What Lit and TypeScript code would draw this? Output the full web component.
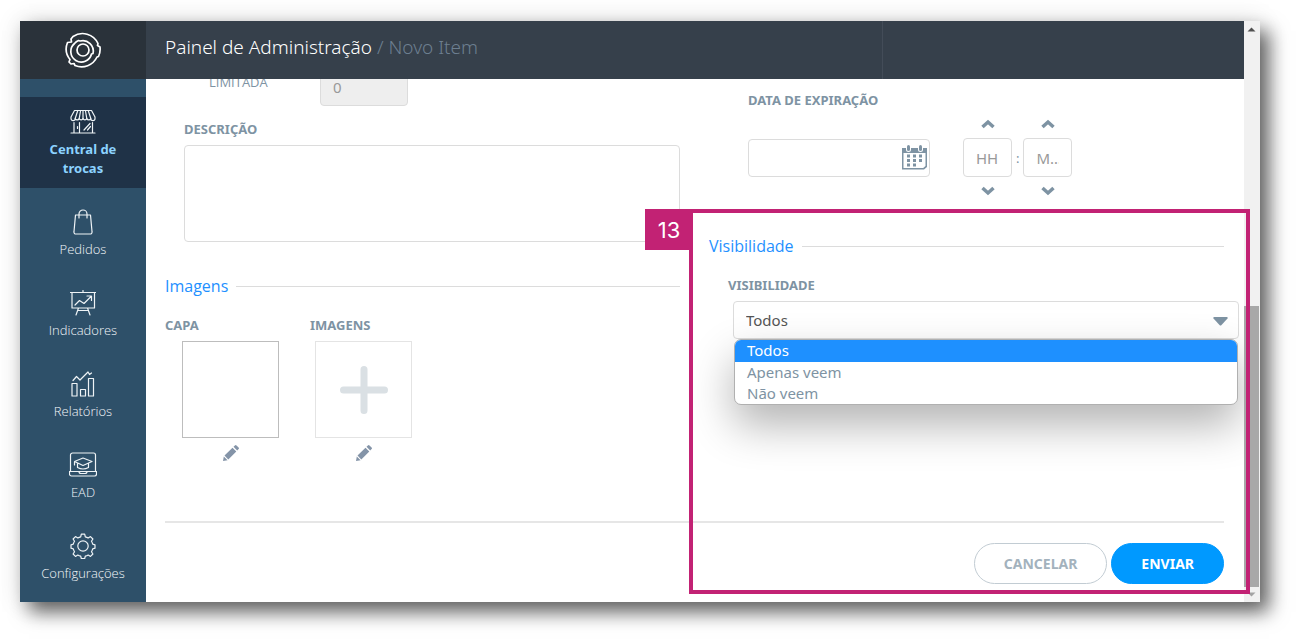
import { LitElement, html, css, svg } from "lit";
import { customElement, property, state } from "lit/decorators.js";
import { classMap } from "lit/directives/class-map.js";

const icons: Record<string, unknown> = {
  store: svg`
    <path d="M4.500 1.500h17l3.500 6.500v1.500a2.100 2.100 0 0 1-4.200 0a2.100 2.100 0 0 1-4 0a2 2 0 0 1-3.800 0a2 2 0 0 1-3.800 0a2.100 2.100 0 0 1-4 0a2.100 2.100 0 0 1-4.200 0V8z"/>
    <path d="M7.800 1.500L5.200 9.500M10.600 1.500L9.200 9.500M13 1.500v8M15.400 1.500l1.400 8M18.200 1.500l2.600 8"/>
    <path d="M1 24h24M4 13.500V24M9.500 13.500V24M22.500 13.500V24M7.500 17.500v2M14 21l6-6.500M17.500 21l3-3.500"/>`,
  bag: svg`
    <path d="M5.500 6h15l1.500 16.500a2 2 0 0 1-2 2.500H6a2 2 0 0 1-2-2.500z"/>
    <path d="M9 9V5a4 4 0 0 1 8 0v4"/>`,
  board: svg`
    <path d="M.5 2.500h25M2 2.500v15.500h22.500V2.500M13 .5v2M8.500 18L6 25M17.500 18L20 25M8 20.500h10.500"/>
    <path d="M5 15l4.500-4.500l4.500 3L21 6.500M17 6h4.500v4.500"/>`,
  chart: svg`
    <path d="M2 12.500h5V25H2zM10.500 18.500h5V25h-5zM18.500 7.500h5V25h-5z"/>
    <path d="M3 9.500l3.500-4l3.500 3.500l8-8l1.500 2.500l2-1.500"/>`,
  laptop: svg`
    <path d="M1.500 19V3a2 2 0 0 1 2-2h21a2 2 0 0 1 2 2v16M.5 19.500h27v2.500a2 2 0 0 1-2 2h-23a2 2 0 0 1-2-2zM10 19.500q0 2 2 2h4q2 0 2-2"/>
    <path d="M5.500 9.500L14 6l9 3.500l-9 4zM8.500 11v4.500q5.500 3 11 0V11M5.500 9.500v3.500"/>`,
  gear: svg`
    <circle cx="13" cy="13" r="5.200"/>
    <path d="M11.300 1.200h3.400l.6 2.600q1.600.4 2.900 1.200l2.300-1.400l2.400 2.400l-1.400 2.300q.8 1.300 1.200 2.900l2.300.6v3.400l-2.300.6q-.4 1.600-1.200 2.900l1.400 2.300l-2.400 2.400l-2.300-1.400q-1.300.8-2.900 1.200l-.6 2.300h-3.400l-.6-2.300q-1.600-.4-2.900-1.200l-2.300 1.400l-2.400-2.400l1.400-2.300q-.8-1.300-1.200-2.900l-2.300-.6v-3.400l2.300-.6q.4-1.600 1.200-2.900l-1.400-2.300l2.400-2.400l2.300 1.400q1.300-.8 2.900-1.200z"/>`,
};

@customElement("side-nav")
class SideNav extends LitElement {
  @property() current = "store";

  static styles = css`
    :host { display: block; background: #2e5069; }
    .list { list-style: none; margin: 0; padding: 18px 0; display: flex; flex-direction: column; gap: 9px; }
    .link {
      display: flex; flex-direction: column; align-items: center; gap: 5px;
      padding: 12px 24px 10px; text-align: center; text-decoration: none;
      font: 400 13px/19px "Open Sans", sans-serif; color: #f2f6f9;
    }
    .link.current { background: #1f3247; color: #8cd3ff; font-family: "Noto Sans", sans-serif; font-weight: 700; }
    .label { white-space: nowrap; font-weight: 300; }
    .current .label { white-space: normal; font-weight: 700; }
    .icon { display: block; height: 26px; fill: none; stroke: #eef3f6; stroke-width: 1.200; stroke-linejoin: round; stroke-linecap: round; }
  `;

  private entries = [
    { icon: "store", label: "Central de trocas" },
    { icon: "bag", label: "Pedidos" },
    { icon: "board", label: "Indicadores" },
    { icon: "chart", label: "Relatórios" },
    { icon: "laptop", label: "EAD" },
    { icon: "gear", label: "Configurações" },
  ];

  render() {
    return html`<nav aria-label="Principal">
      <ul class="list">
        ${this.entries.map(
          (e) => html`<li>
            <a href="#" class=${classMap({ link: true, current: e.icon === this.current })}>
              <svg class="icon" width=${e.icon === "laptop" ? 28 : 26} viewBox=${e.icon === "laptop" ? "0 0 28 26" : "0 0 26 26"} aria-hidden="true">${icons[e.icon]}</svg>
              <span class="label">${e.label}</span>
            </a>
          </li>`
        )}
      </ul>
    </nav>`;
  }
}

@customElement("app-root")
class AppRoot extends LitElement {
  @state() private chosen = "Todos";
  private options = ["Todos", "Apenas veem", "Não veem"];

  static styles = css`
    * { box-sizing: border-box; }
    :host { display: block; background: #fff; font-family: "Noto Sans", sans-serif; color: #7e93a3; }
    .page { height: 100vh; padding: 21px 40px 40px 20px; display: flex; overflow: hidden; }
    .window {
      position: relative; flex: 1; display: grid; grid-template: 58px minmax(0, 1fr) / 126px minmax(0, 1fr) 16px;
      background: #fff; box-shadow: 9px 10px 18px rgba(0, 0, 0, 0.6), 0 0 24px rgba(0, 0, 0, 0.12);
    }
    .brand { background: #2a323a; display: flex; align-items: center; justify-content: center; }
    .logo { fill: none; stroke: #fff; stroke-width: 1.700; stroke-linejoin: round; }
    .bar { background: #36404b; display: flex; }
    .title { flex: 1; margin: 0; padding: 0 20px 6px 19px; font-size: 19px; line-height: 52px; font-weight: 300; color: #fff; }
    .crumb { color: #6d7f90; }
    .bar-end { flex: 0 0 33%; border-left: 1px solid #434c58; }

    .scrollbar { grid-column: 3; grid-row: 1 / 3; background: #f1f1f1; display: flex; flex-direction: column; align-items: center; padding-right: 1px; }
    .arrow { height: 15px; display: block; }
    .track { flex: 1; align-self: stretch; display: flex; flex-direction: column; justify-content: flex-end; }
    .thumb { height: 51%; background: #a8a8a8; }

    .form { grid-column: 2; min-height: 0; overflow: hidden; display: flex; flex-direction: column; justify-content: flex-end; padding: 0 20px 0 19px; }
    .columns { display: grid; grid-template-columns: minmax(0, 1fr) minmax(0, 1fr); gap: 29px; padding-bottom: 60px; }
    .label { display: block; font-size: 13px; line-height: 20px; font-weight: 700; }
    .field { width: 100%; height: 38px; border: 1px solid #dcdcdc; border-radius: 4px; background: #fff; font: 400 15px/20px "Noto Sans", sans-serif; color: #555; padding: 0 12px; display: block; }
    .field::placeholder { color: #999; opacity: 1; }

    .limit { display: flex; padding-left: 44px; }
    .limit-label { width: 111px; font: 400 13px/28px "Open Sans", sans-serif; }
    .limit-field { width: 88px; background: #eee; color: #999; }
    .description { padding: 13px 0 0 19px; }
    .area { height: 97px; margin-top: 6px; resize: none; }

    .heading { display: flex; align-items: center; gap: 8px; margin: 32px 0 17px; font: 400 16px/24px "Open Sans", sans-serif; color: #1e90ff; }
    .heading::after { content: ""; flex: 1; border-top: 1px solid #dcdcdc; }
    .pictures { display: flex; }
    .picture { width: 145px; }
    .frame { display: flex; flex-direction: column; align-items: center; gap: 7px; width: 97px; margin: 6px 0 0 17px; }
    .frame.add { margin-left: 5px; }
    .tile { width: 97px; height: 97px; padding: 0; border: 1px solid #bdbdbd; background: #fff; display: flex; align-items: center; justify-content: center; }
    .add .tile { border-color: #e4e4e4; }
    .icon-button { padding: 0; border: 0; background: none; display: block; line-height: 0; color: #8494a8; }

    .expiry { padding: 22px 0 0 39px; }
    .when { display: flex; align-items: center; gap: 33px; margin-top: 7px; }
    .date { width: 182px; display: flex; align-items: center; border: 1px solid #dcdcdc; border-radius: 4px; height: 38px; padding-right: 2px; }
    .date-field { flex: 1; min-width: 0; border: 0; background: none; padding: 0 12px; font: 400 15px/20px "Noto Sans", sans-serif; color: #555; }
    .time { display: flex; align-items: center; gap: 4px; font-size: 13px; }
    .unit { display: flex; flex-direction: column; align-items: center; gap: 7px; }
    .unit-field { width: 49px; height: 39px; text-overflow: ellipsis; }
    .step { width: 14px; height: 14px; padding: 0; border: 0; background: none; display: block; line-height: 0; }

    .right-heading { margin-top: 36px; }
    .visibility { padding-left: 19px; }
    .picker { position: relative; margin: 6px -15px 0 5px; }
    .select { appearance: none; }
    .caret { position: absolute; right: 11px; top: 16px; pointer-events: none; }
    .menu {
      position: absolute; z-index: 1; top: 38px; left: 1px; right: 1px; margin: 0; padding: 0; list-style: none; overflow: hidden;
      border: 1px solid #b0b0b0; border-radius: 7px; background: #fff; font-size: 15px; line-height: 21px;
      box-shadow: 0 20px 44px rgba(0, 0, 0, 0.3);
    }
    .option { padding: 0 12px; }
    .option.on { background: #1e90ff; color: #fff; padding-bottom: 1px; }

    .actions { display: flex; justify-content: flex-end; gap: 4px; border-top: 2px solid #e6e6e6; padding: 20px 0 18px; }
    .button { height: 41px; padding: 0 29px; border: 1px solid #c2ccd3; border-radius: 21px; background: #fff; color: #a3b2bd; font: 700 14px/20px "Noto Sans", sans-serif; }
    .button.primary { background: #0099ff; border-color: #0099ff; color: #fff; }

    .callout { position: absolute; z-index: 2; left: calc(50% + 49px); right: 10px; bottom: 8px; height: 385px; border: 4px solid #c22274; pointer-events: none; }
    .number { position: absolute; top: -4px; right: 100%; width: 48px; height: 41px; background: #c22274; color: #fff; font: 400 22px/42px Inter, sans-serif; text-align: center; }
  `;

  private chevron(up: boolean) {
    return html`<svg width="14" height="14" viewBox="0 0 14 14" fill="none" stroke="#7e93a3" stroke-width="3.500" aria-hidden="true">
      <path d=${up ? "M1.500 10L7 5l5.500 5" : "M1.500 4L7 9l5.500-5"} />
    </svg>`;
  }

  private pencil() {
    return html`<svg width="16" height="16" viewBox="0 0 16 16" fill="currentColor" aria-hidden="true">
      <path d="M0 16l.8-4.600l3.800 3.800zM1.500 10.500L9.500 2.700l3.800 3.800l-8 7.900zM10.500 1.800l1.400-1.400q.8-.8 1.600 0l2.100 2.100q.8.8 0 1.600L14.200 5.600z" />
    </svg>`;
  }

  private unit(name: string, placeholder: string) {
    return html`<div class="unit">
      <button class="step" type="button" aria-label="Aumentar ${name}">${this.chevron(true)}</button>
      <input class="field unit-field" placeholder=${placeholder} aria-label=${name} />
      <button class="step" type="button" aria-label="Diminuir ${name}">${this.chevron(false)}</button>
    </div>`;
  }

  render() {
    return html`<div class="page">
      <div class="window">
        <div class="brand">
          <svg class="logo" width="38" height="38" viewBox="0 0 38 38" aria-label="Logo" role="img">
            <circle cx="19" cy="19" r="6" />
            <path d="M10.500 12.500A10.500 10.500 0 0 1 14.500 9.500l1.500.5a10.500 10.500 0 0 1 13 12.500l-1.500.5a10.500 10.500 0 1 1-17-10.500z" />
            <path d="M9 5.500A17 17 0 0 1 34 12.500l-.5 2l2.500 1.500q.6 5-1.500 9.500l-1.500.5A17 17 0 0 1 11 34.500l-1-2l-3 .5l-2-2l1-2.500A17 17 0 0 1 3.500 11.500l4-.5l-.5-3z" />
          </svg>
        </div>
        <header class="bar">
          <h1 class="title">Painel de Administração <span class="crumb">/ Novo Item</span></h1>
          <div class="bar-end"></div>
        </header>
        <div class="scrollbar" aria-hidden="true">
          <svg class="arrow" width="9" viewBox="0 0 9 15"><path d="M.5 10.500L4.500 6.500l4 4z" fill="#505050" /></svg>
          <div class="track"><div class="thumb"></div></div>
          <svg class="arrow" width="9" viewBox="0 0 9 15"><path d="M.5 5.500l4 4l4-4z" fill="#a3a3a3" /></svg>
        </div>
        <side-nav></side-nav>
        <form class="form" @submit=${(e: Event) => e.preventDefault()}>
          <div class="columns">
            <section>
              <div class="limit">
                <label class="limit-label" for="limit">LIMITADA</label>
                <input class="field limit-field" id="limit" value="0" disabled />
              </div>
              <div class="description">
                <label class="label" for="description">DESCRIÇÃO</label>
                <textarea class="field area" id="description"></textarea>
              </div>
              <h2 class="heading">Imagens</h2>
              <div class="pictures">
                <div class="picture">
                  <span class="label">CAPA</span>
                  <div class="frame">
                    <button class="tile" type="button" aria-label="Capa"></button>
                    <button class="icon-button" type="button" aria-label="Editar capa">${this.pencil()}</button>
                  </div>
                </div>
                <div class="picture">
                  <span class="label">IMAGENS</span>
                  <div class="frame add">
                    <button class="tile" type="button" aria-label="Adicionar imagem">
                      <svg width="50" height="50" viewBox="0 0 50 50" stroke="#dae0e4" stroke-width="7" stroke-linecap="round" aria-hidden="true">
                        <path d="M25 4.500v41M4.500 25h41" />
                      </svg>
                    </button>
                    <button class="icon-button" type="button" aria-label="Editar imagens">${this.pencil()}</button>
                  </div>
                </div>
              </div>
            </section>
            <section>
              <div class="expiry">
                <label class="label" for="expiry">DATA DE EXPIRAÇÃO</label>
                <div class="when">
                  <div class="date">
                    <input class="date-field" id="expiry" />
                    <button class="icon-button" type="button" aria-label="Abrir calendário">
                      <svg width="25" height="25" viewBox="0 0 25 25" fill="#7e93a3" aria-hidden="true">
                        <path d="M0 3h4v1.500a2.500 2.500 0 0 0 5 0V3h7v1.500a2.500 2.500 0 0 0 5 0V3h4v19l-3 2.500H0zM1.500 8v15h19.700l2.300-2V8z" fill-rule="evenodd" />
                        <rect x="5" y="0" width="3" height="6" rx="1.500" /><rect x="17" y="0" width="3" height="6" rx="1.500" />
                        <path d="M5 9.500h3v3H5zM11 9.500h3v3h-3zM17 9.500h3v3h-3zM5 14h3v3H5zM11 14h3v3h-3zM17 14h3v3h-3zM5 18.500h3v3H5zM11 18.500h3v3h-3z" />
                      </svg>
                    </button>
                  </div>
                  <div class="time">${this.unit("hora", "HH")}<span>:</span>${this.unit("minuto", "MM")}</div>
                </div>
              </div>
              <h2 class="heading right-heading">Visibilidade</h2>
              <div class="visibility">
                <label class="label" for="visibility">VISIBILIDADE</label>
                <div class="picker">
                  <select class="field select" id="visibility" .value=${this.chosen} @change=${(e: Event) => (this.chosen = (e.target as HTMLSelectElement).value)}>
                    ${this.options.map((o) => html`<option>${o}</option>`)}
                  </select>
                  <svg class="caret" width="15" height="9" viewBox="0 0 15 9" fill="#7e93a3" aria-hidden="true"><path d="M.5 0h14v1.500L8.500 8q-1 1-2 0L.5 1.500z" /></svg>
                  <ul class="menu" role="listbox" aria-label="Visibilidade">
                    ${this.options.map(
                      (o) => html`<li role="option" aria-selected=${o === this.chosen} class=${classMap({ option: true, on: o === this.chosen })} @click=${() => (this.chosen = o)}>${o}</li>`
                    )}
                  </ul>
                </div>
              </div>
            </section>
          </div>
          <div class="actions">
            <button class="button" type="button">CANCELAR</button>
            <button class="button primary" type="submit">ENVIAR</button>
          </div>
        </form>
        <div class="callout"><div class="number">13</div></div>
      </div>
    </div>`;
  }
}
